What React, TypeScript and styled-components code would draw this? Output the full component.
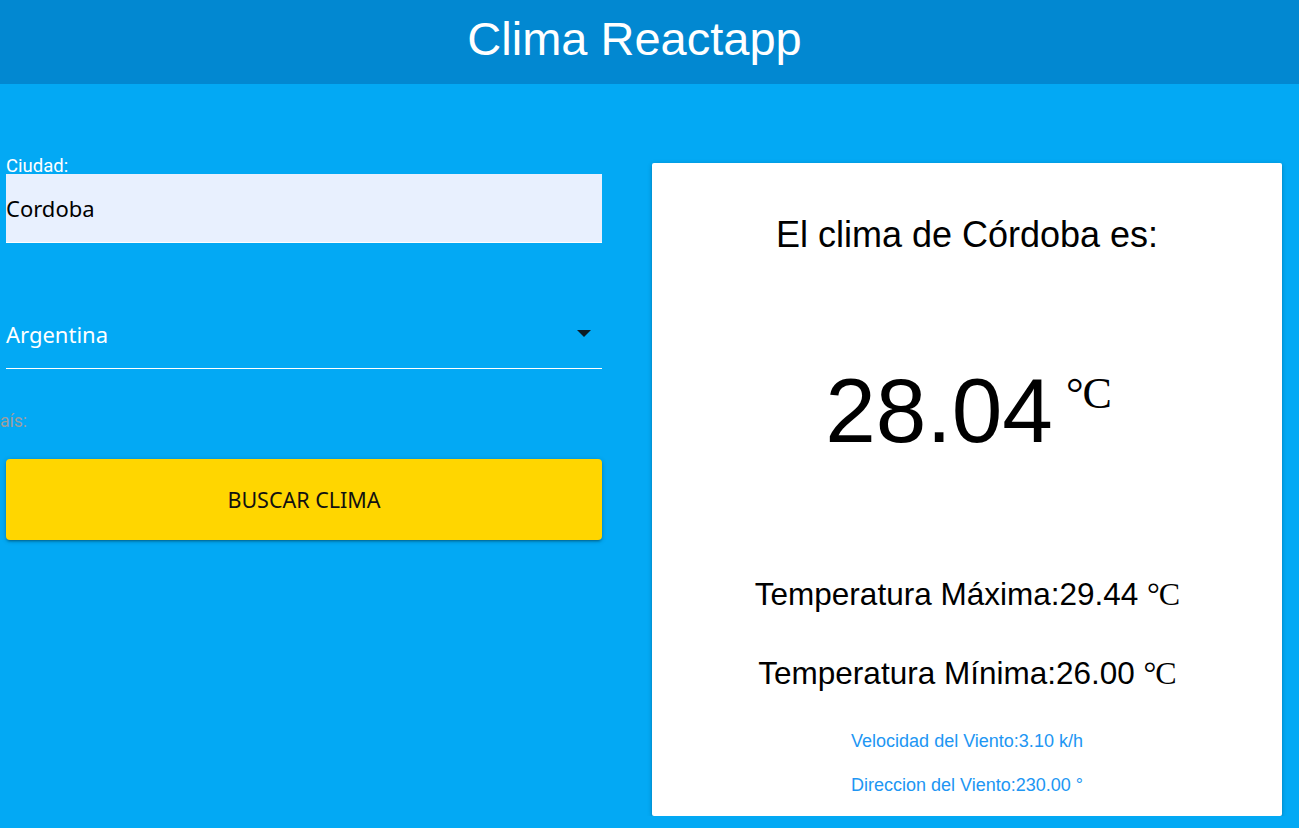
import React from "react";
import styled, { createGlobalStyle } from "styled-components";

const Global = createGlobalStyle`
  html, body { margin: 0; padding: 0; }
  body {
    background: #03a9f4;
    font-family: "Liberation Sans", Arial, sans-serif;
    overflow: hidden;
  }
`;

const Header = styled.header`
  height: 84px;
  background: #0288d1;
  display: flex;
  align-items: center;
  justify-content: center;
  padding-right: 30px;
`;

const HeaderTitle = styled.h1`
  margin: 0;
  color: #fff;
  font-family: "Liberation Sans", Arial, sans-serif;
  font-weight: 400;
  font-size: 47px;
  line-height: 1;
  margin-top: -8px;
`;

const Main = styled.main`
  display: grid;
  grid-template-columns: 596px 630px;
  column-gap: 50px;
  padding: 72px 0 0 6px;
  align-items: start;
`;

const Form = styled.form`
  display: flex;
  flex-direction: column;
  padding-top: 2px;
`;

const FieldLabel = styled.label<{ $muted?: boolean }>`
  font-family: Roboto, "Liberation Sans", sans-serif;
  font-size: ${(p) => (p.$muted ? "17.5px" : "18.5px")};
  color: ${(p) => (p.$muted ? "#9e9e9e" : "#fff")};
  line-height: 16px;
`;

const TextInput = styled.input`
  box-sizing: border-box;
  width: 100%;
  height: 69px;
  margin: 0;
  border: none;
  border-bottom: 1px solid #fff;
  background: #e8f0fe;
  padding: 0;
  font-family: "Noto Sans", "Open Sans", sans-serif;
  font-size: 22px;
  color: #000;
  outline: none;
`;

const SelectWrap = styled.div`
  position: relative;
  margin-top: 58px;
  height: 68px;
  border-bottom: 1px solid #fff;
  display: flex;
  align-items: center;
  padding-bottom: 2px;
  box-sizing: border-box;
`;

const SelectValue = styled.span`
  font-family: "Noto Sans", "Open Sans", sans-serif;
  font-size: 22px;
  color: #fff;
`;

const Caret = styled.span`
  position: absolute;
  right: 11px;
  top: 29px;
  width: 0;
  height: 0;
  border-left: 7px solid transparent;
  border-right: 7px solid transparent;
  border-top: 7px solid #0d1b24;
`;

const PaisLabel = styled(FieldLabel)`
  margin-left: -6px;
  margin-top: 44px;
  display: block;
  overflow: hidden;
  white-space: nowrap;
  text-indent: -11px;
`;

const Button = styled.button`
  margin-top: 30px;
  height: 81px;
  width: 100%;
  border: none;
  border-radius: 4px;
  background: #ffd600;
  box-shadow: 0 2px 2px 0 rgba(0, 0, 0, 0.14), 0 3px 1px -2px rgba(0, 0, 0, 0.12),
    0 1px 5px 0 rgba(0, 0, 0, 0.2);
  font-family: "Noto Sans", "Open Sans", sans-serif;
  font-size: 21.5px;
  color: #111;
  cursor: pointer;
`;

const Card = styled.section`
  margin-top: 7px;
  height: 653px;
  background: #fff;
  border-radius: 2px;
  box-shadow: 0 2px 2px 0 rgba(0, 0, 0, 0.14), 0 3px 1px -2px rgba(0, 0, 0, 0.12),
    0 1px 5px 0 rgba(0, 0, 0, 0.2);
  display: flex;
  flex-direction: column;
  align-items: center;
  color: #000;
  font-family: "Liberation Sans", Arial, sans-serif;
  box-sizing: border-box;
  padding-top: 50px;
`;

const CardTitle = styled.h2`
  margin: 0;
  font-weight: 400;
  font-size: 36px;
  line-height: 44px;
`;

const BigTemp = styled.p`
  margin: 104px 0 0 0;
  font-size: 91px;
  line-height: 100px;
  display: flex;
  align-items: flex-start;
  padding-left: 2px;
`;

const Unit = styled.span<{ $size: number }>`
  font-family: "Liberation Serif", "Times New Roman", serif;
  font-size: ${(p) => p.$size}px;
  letter-spacing: -1px;
`;

const BigUnit = styled(Unit)`
  line-height: 1;
  margin-top: 11px;
  margin-left: 13px;
`;

const Detail = styled.p<{ $top: number }>`
  margin: ${(p) => p.$top}px 0 0 0;
  font-size: 31.5px;
  line-height: 40px;
`;

const Wind = styled.p<{ $top: number }>`
  margin: ${(p) => p.$top}px 0 0 0;
  font-size: 18px;
  line-height: 20px;
  color: #2196f3;
`;

export default function App() {
  return (
    <>
      <Global />
      <Header>
        <HeaderTitle>Clima Reactapp</HeaderTitle>
      </Header>
      <Main>
        <Form onSubmit={(e) => e.preventDefault()}>
          <FieldLabel htmlFor="ciudad">Ciudad:</FieldLabel>
          <TextInput id="ciudad" defaultValue="Cordoba" />
          <SelectWrap>
            <SelectValue>Argentina</SelectValue>
            <Caret />
          </SelectWrap>
          <PaisLabel $muted>País:</PaisLabel>
          <Button type="submit">BUSCAR CLIMA</Button>
        </Form>
        <Card>
          <CardTitle>El clima de Córdoba es:</CardTitle>
          <BigTemp>
            28.04<BigUnit $size={44}>°C</BigUnit>
          </BigTemp>
          <Detail $top={113}>
            Temperatura Máxima:29.44 <Unit $size={32}>°C</Unit>
          </Detail>
          <Detail $top={39}>
            Temperatura Mínima:26.00 <Unit $size={32}>°C</Unit>
          </Detail>
          <Wind $top={38}>Velocidad del Viento:3.10 k/h</Wind>
          <Wind $top={24}>Direccion del Viento:230.00 °</Wind>
        </Card>
      </Main>
    </>
  );
}
